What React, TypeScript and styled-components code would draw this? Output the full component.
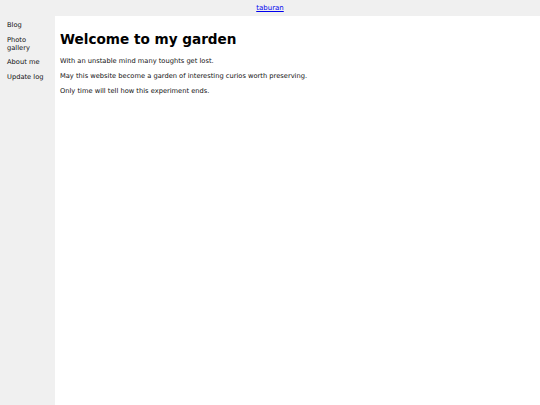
import React from 'react'
import styled, { createGlobalStyle } from 'styled-components'

const GlobalStyle = createGlobalStyle`
  html, body {
    margin: 0;
    padding: 0;
    height: 100%;
    background: #f0f0f0;
    font-family: "DejaVu Sans", Verdana, sans-serif;
  }
  #root {
    height: 100%;
  }
`

const Page = styled.div`
  display: flex;
  flex-direction: column;
  height: 100%;
`

const Header = styled.header`
  height: 16px;
  display: flex;
  align-items: center;
  justify-content: center;
  background: #f0f0f0;
  font-size: 7px;

  a {
    color: #0000ee;
  }
`

const Body = styled.div`
  flex: 1;
  display: flex;
`

const Sidebar = styled.nav`
  width: 55px;
  background: #f0f0f0;
  padding: 5px 8px 0 7px;
  box-sizing: border-box;
  display: flex;
  flex-direction: column;
  gap: 6.5px;
`

const NavItem = styled.div`
  font-size: 6.7px;
  line-height: 8px;
  color: #111;
`

const Main = styled.main`
  flex: 1;
  background: #fff;
  padding: 15px 0 0 5px;
`

const Title = styled.h1`
  margin: 0 0 10px;
  font-size: 13.6px;
  line-height: 16px;
  font-weight: bold;
  color: #000;
`

const Para = styled.p`
  margin: 0 0 7px;
  font-size: 6.7px;
  line-height: 8px;
  color: #111;
`

const App: React.FC = () => {
  return (
    <>
      <GlobalStyle />
      <Page>
        <Header>
          <a href="#">taburan</a>
        </Header>
        <Body>
          <Sidebar>
            <NavItem>Blog</NavItem>
            <NavItem>Photo gallery</NavItem>
            <NavItem>About me</NavItem>
            <NavItem>Update log</NavItem>
          </Sidebar>
          <Main>
            <Title>Welcome to my garden</Title>
            <Para>With an unstable mind many toughts get lost.</Para>
            <Para>May this website become a garden of interesting curios worth preserving.</Para>
            <Para>Only time will tell how this experiment ends.</Para>
          </Main>
        </Body>
      </Page>
    </>
  )
}

export default App
